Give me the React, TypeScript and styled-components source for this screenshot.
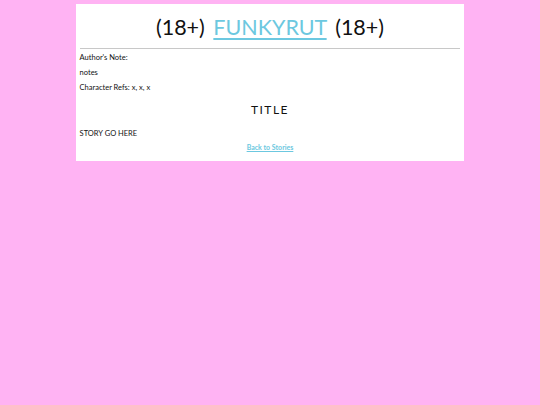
import styled, { createGlobalStyle } from 'styled-components';

const GlobalStyle = createGlobalStyle`
  html, body {
    margin: 0;
    padding: 0;
    background: #ffb3f3;
    font-family: Lato, "DejaVu Sans", sans-serif;
  }
`;

export default function App() {
  return (
    <>
      <GlobalStyle />
      <Page>
        <Header>
          (18+) <SiteLink href="#">FUNKYRUT</SiteLink> (18+)
        </Header>
        <Divider />
        <Line>Author's Note:</Line>
        <Line>notes</Line>
        <Line>Character Refs: x, x, x</Line>
        <StoryTitle>TITLE</StoryTitle>
        <Line>STORY GO HERE</Line>
        <Footer>
          <BackLink href="#">Back to Stories</BackLink>
        </Footer>
      </Page>
    </>
  );
}

const Page = styled.main`
  width: 72%;
  margin: 4px auto 0;
  padding: 0 4px 7px;
  box-sizing: border-box;
  background: #fff;
  color: #111;
`;

const Header = styled.h1`
  margin: 0;
  padding: 10px 0 7px;
  font-size: 21.5px;
  line-height: 27px;
  font-weight: normal;
  word-spacing: 3px;
  text-align: center;
  color: #111;
`;

const SiteLink = styled.a`
  color: #6cc8e0;
  text-decoration: underline;
  text-decoration-thickness: 2px;
  text-underline-offset: 3px;
`;

const Divider = styled.hr`
  margin: 0 0 1px;
  border: 0;
  border-top: 1px solid #c8c8c8;
`;

const Line = styled.p`
  margin: 0;
  font-size: 7.5px;
  line-height: 15px;
`;

const StoryTitle = styled.h2`
  margin: 0;
  padding: 7px 0 9px;
  font-size: 12px;
  line-height: 15px;
  font-weight: normal;
  letter-spacing: 1.5px;
  text-align: center;
`;

const Footer = styled.div`
  font-size: 7px;
  line-height: 13px;
  text-align: center;
`;

const BackLink = styled.a`
  font-weight: bold;
  color: #6cc8e0;
`;
